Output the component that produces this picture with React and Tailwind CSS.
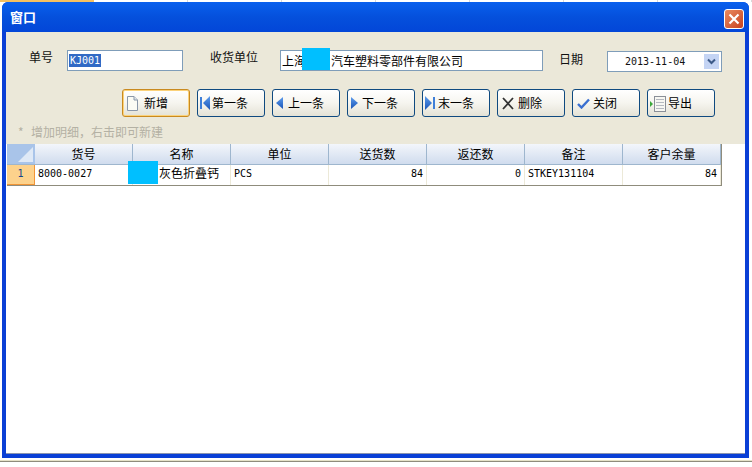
import React from "react";

const font = { fontFamily: '"Noto Sans CJK SC","Liberation Sans",sans-serif' };
const mono = { fontFamily: '"DejaVu Sans Mono","Noto Sans CJK SC",monospace' };

const Page = () => (
  <svg width="11" height="15" viewBox="0 0 11 15"><path d="M.5.5H7L10.5 4V14.5H.5Z" fill="#fbfbf4" stroke="#8a97a8"/><path d="M7 .5V4H10.5" fill="#dfe4ea" stroke="#8a97a8"/></svg>
);
const Grad = ({ id }) => (
  <defs><linearGradient id={id} x1="0" y1="0" x2="0" y2="1"><stop offset="0" stopColor="#5d9cec"/><stop offset="1" stopColor="#1a55b8"/></linearGradient></defs>
);
const First = () => (
  <svg width="10" height="14" viewBox="0 0 10 14"><Grad id="g1"/><rect x="0" y="1" width="2" height="12" fill="#3f7fd8"/><path d="M10 0V14L3 7Z" fill="url(#g1)"/></svg>
);
const Last = () => (
  <svg width="10" height="14" viewBox="0 0 10 14"><Grad id="g2"/><path d="M0 0V14L7 7Z" fill="url(#g2)"/><rect x="8" y="1" width="2" height="12" fill="#3f7fd8"/></svg>
);
const Prev = () => (
  <svg width="7" height="12" viewBox="0 0 7 12"><Grad id="g3"/><path d="M7 0V12L0 6Z" fill="url(#g3)"/></svg>
);
const Next = () => (
  <svg width="7" height="12" viewBox="0 0 7 12"><Grad id="g4"/><path d="M0 0V12L7 6Z" fill="url(#g4)"/></svg>
);
const XIcon = () => (
  <svg width="12" height="13" viewBox="0 0 12 13"><path d="M1 1L11 12M11 1L1 12" stroke="#333" strokeWidth="1.8" fill="none"/></svg>
);
const Check = () => (
  <svg width="13" height="11" viewBox="0 0 13 11"><path d="M1 6L4.5 9.5L12 1.5" stroke="#3a6fd0" strokeWidth="2.4" fill="none"/></svg>
);
const Export = () => (
  <svg width="16" height="17" viewBox="0 0 16 17">
    <path d="M0 6V12L3 9Z" fill="#3aa83a"/>
    <rect x="4.5" y="1.5" width="11" height="15" fill="#f7f7f2" stroke="#8a8f98"/>
    <path d="M6 4.5H14M6 7.5H14M6 10.5H14M6 13.5H14" stroke="#b5b9c0"/>
  </svg>
);

const buttons = [
  { label: "新增", icon: <Page />, active: true, cls: "pl-[4px] gap-[6px]" },
  { label: "第一条", icon: <First />, cls: "pl-[2px] gap-[2px]" },
  { label: "上一条", icon: <Prev />, cls: "pl-[3px] gap-[5px]" },
  { label: "下一条", icon: <Next />, cls: "pl-[3px] gap-[4px]" },
  { label: "末一条", icon: <Last />, cls: "pl-[2px] gap-[3px]" },
  { label: "删除", icon: <XIcon />, cls: "pl-[4px] gap-[4px]" },
  { label: "关闭", icon: <Check />, cls: "pl-[4px] gap-[3px]" },
  { label: "导出", icon: <Export />, cls: "pl-[2px] gap-[2px]" },
];

const headers = ["货号", "名称", "单位", "送货数", "返还数", "备注", "客户余量"];

const Cell = ({ children, right }) => (
  <div className={`w-[98px] h-[20px] shrink-0 border-r border-[#ece9d8] px-[3px] text-[10px] leading-[18px] text-black whitespace-nowrap ${right ? "text-right" : ""}`} style={mono}>{children}</div>
);

export default function App() {
  return (
    <div className="w-[752px] h-[467px] bg-white overflow-hidden" style={font}>
      <div className="h-[2px] flex">
        <div className="w-[98px] h-[2px] bg-[#f5c060]" />
        {[0, 1, 2, 3, 4, 5, 6].map((i) => (
          <div key={i} className="w-[98px] h-[2px] border-r border-[#d8d8d8]" />
        ))}
      </div>
      <div className="ml-[2px] w-[747px] h-[456px] flex flex-col rounded-t-[6px] bg-[#0a3fd6] overflow-hidden">
        <div className="h-[30px] shrink-0 flex justify-between pl-[8px] pr-[5px] bg-gradient-to-b from-[#0a60ee] via-[#0550dc] to-[#0346d8]">
          <span className="text-white font-bold text-[13px] leading-[30px]">窗口</span>
          <div className="mt-[7px] w-[20px] h-[20px] rounded-[3px] border border-white bg-gradient-to-br from-[#e88a60] to-[#c8401c] flex items-center justify-center">
            <svg width="12" height="12" viewBox="0 0 12 12"><path d="M1.5 1.5L10.5 10.5M10.5 1.5L1.5 10.5" stroke="#fff" strokeWidth="2.2" /></svg>
          </div>
        </div>
        <div className="flex-1 mx-[4px] mb-[4px] bg-white flex flex-col min-h-0 border-b border-[#8a94b0]">
          <div className="h-[112px] shrink-0 bg-[#ebe8d9] flex flex-col">
            <div className="flex items-start h-[54px] pt-[18px] pl-[23px] text-[12px] text-[#111]">
              <span className="w-[38px] leading-[16px] mt-[-1px]">单号</span>
              <div className="w-[116px] h-[21px] bg-white border border-[#7f9db9] flex items-center pl-[1px]">
                <span className="bg-[#316ac5] text-white text-[10px] leading-[13px] px-[1px]" style={mono}>KJ001</span>
              </div>
              <span className="ml-[27px] w-[70px] leading-[16px] mt-[-1px]">收货单位</span>
              <div className="relative w-[263px] h-[21px] bg-white border border-[#7f9db9] flex items-center pl-[1px] text-[12px] text-black whitespace-nowrap">
                上海<span className="w-[25px] shrink-0" />汽车塑料零部件有限公司
                <div className="absolute left-[21px] top-[-3px] w-[28px] h-[22px] bg-[#00bfff]" />
              </div>
              <span className="ml-[16px] w-[48px] leading-[16px] mt-[1px]">日期</span>
              <div className="w-[115px] h-[21px] mt-[1px] bg-white border border-[#7f9db9] flex items-center justify-between pr-[2px]">
                <span className="ml-[17px] text-[10px]" style={mono}>2013-11-04</span>
                <div className="w-[15px] h-[15px] bg-[#c4d4f4] flex items-center justify-center">
                  <svg width="9" height="7" viewBox="0 0 9 7"><path d="M1 1.5L4.5 5L8 1.5" stroke="#3c5a88" strokeWidth="2" fill="none"/></svg>
                </div>
              </div>
            </div>
            <div className="flex gap-[7px] pl-[116px] pt-[3px]">
              {buttons.map((b) => (
                <div key={b.label} className={`w-[68px] h-[28px] shrink-0 rounded-[3px] border ${b.active ? "border-[#c98a20] shadow-[inset_0_0_0_1px_#fbd27a]" : "border-[#0f4a80]"} bg-gradient-to-b from-white via-[#f6f5ef] to-[#e4e2d6] flex items-center ${b.cls} text-[12px] text-black whitespace-nowrap`}>
                  {b.icon}<span>{b.label}</span>
                </div>
              ))}
            </div>
            <div className="mt-[7px] pl-[12px] flex text-[12px] leading-[16px] text-[#b4b1a4]"><span className="w-[13px]">*</span><span>增加明细，右击即可新建</span></div>
          </div>
          <div className="flex-1 bg-white pl-[1px] min-h-0">
            <div className="w-[715px] border-r border-b border-[#8f8c7c]">
              <div className="flex h-[21px] border-b border-[#9eb6ce]">
                <div className="relative w-[28px] shrink-0 bg-[#a9c4e9]">
                  <svg className="absolute right-[2px] bottom-[2px]" width="15" height="15" viewBox="0 0 15 15"><path d="M15 0V15H0Z" fill="#dfe9f6"/></svg>
                </div>
                {headers.map((h) => (
                  <div key={h} className="w-[98px] shrink-0 border-r border-[#9eb6ce] bg-gradient-to-b from-[#f3f6fb] to-[#d0dcee] text-center text-[12px] leading-[20px] text-black">{h}</div>
                ))}
              </div>
              <div className="flex h-[20px]">
                <div className="w-[28px] shrink-0 bg-[#fdd28c] border-r border-b border-[#f29536] text-center text-[10px] leading-[18px] text-[#15428b]" style={mono}>1</div>
                <Cell>8000-0027</Cell>
                <div className="relative w-[98px] h-[20px] shrink-0 border-r border-[#ece9d8] text-[12px] leading-[15px] text-black whitespace-nowrap pl-[26px]">
                  灰色折叠钙
                  <div className="absolute left-[-5px] top-[-4px] w-[30px] h-[23px] bg-[#00bfff]" />
                </div>
                <Cell>PCS</Cell>
                <Cell right>84</Cell>
                <Cell right>0</Cell>
                <Cell>STKEY131104</Cell>
                <Cell right>84</Cell>
              </div>
            </div>
          </div>
        </div>
      </div>
      <div className="mt-[2px] h-[1px] bg-[#e6e2c8]" />
      <div className="h-[1px] bg-[#8f8c7c]" />
    </div>
  );
}
